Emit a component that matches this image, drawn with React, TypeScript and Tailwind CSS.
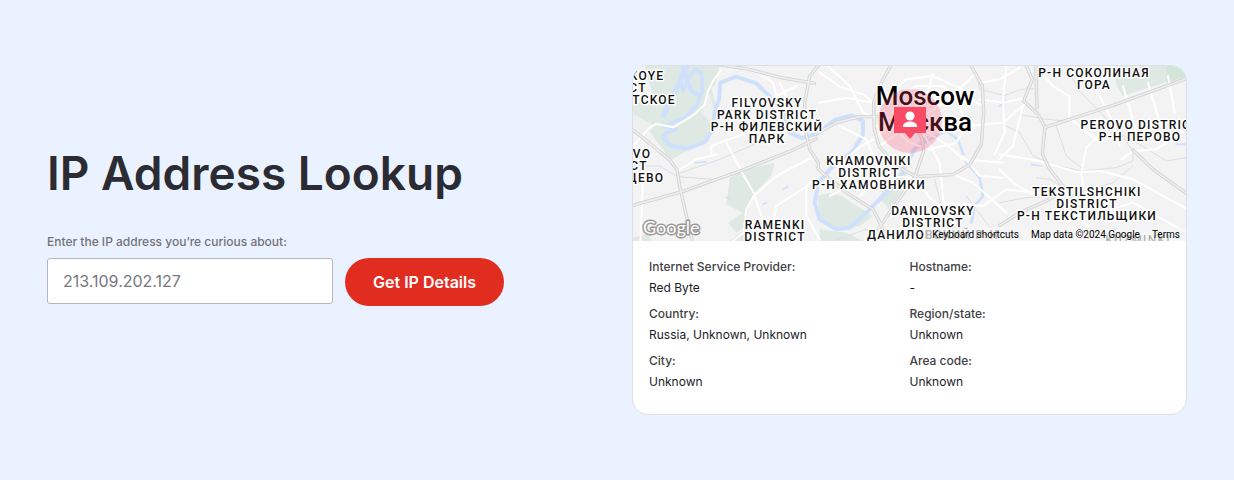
type Label = { x: number; y: number; lines: string[] };

const labels: Label[] = [
  { x: 14, y: 14, lines: ["KOYE"] },
  { x: 5, y: 26, lines: ["CT"] },
  { x: 21, y: 38, lines: ["TCKOE"] },
  { x: 134, y: 41, lines: ["FILYOVSKY", "PARK DISTRICT", "Р-Н ФИЛЕВСКИЙ", "ПАРК"] },
  { x: 9, y: 92, lines: ["VO"] },
  { x: 6, y: 104, lines: ["CT"] },
  { x: 13, y: 116, lines: ["ЦЕВО"] },
  { x: 142, y: 163, lines: ["RAMENKI", "DISTRICT"] },
  { x: 236, y: 99, lines: ["KHAMOVNIKI", "DISTRICT", "Р-Н ХАМОВНИКИ"] },
  { x: 300, y: 149, lines: ["DANILOVSKY", "DISTRICT", "ДАНИЛОВСКИЙ Р-Н"] },
  { x: 461, y: 11, lines: ["Р-Н СОКОЛИНАЯ", "ГОРА"] },
  { x: 507, y: 63, lines: ["PEROVO DISTRICT", "Р-Н ПЕРОВО"] },
  { x: 454, y: 130, lines: ["TEKSTILSHCHIKI", "DISTRICT", "Р-Н ТЕКСТИЛЬЩИКИ"] },
  { x: 505, y: 178, lines: ["KUZMINKI"] },
];

const highways = [
  // west
  "M0 192L60 240L112 284L132 312L140 360L158 440L178 525",
  "M0 418L150 376L330 312L480 252L550 218",
  "M250 -5L350 10L440 34L545 52",
  // third ring
  "M559 -5L530 30L515 110L514 180L530 250L556 290L556 310L640 380L720 430L746 480L760 525",
  "M546 205L610 170L680 152L740 152",
  "M775 -5L740 60L722 110L724 190L738 240L790 300L850 332L960 326L1010 296L1045 235L1052 140L1048 60L1015 0",
  "M735 490L790 410L845 334L872 255L868 220L850 185",
  // east
  "M1178 -5L1198 40L1172 105L1215 145L1236 184L1228 265L1250 310L1290 360",
  "M1208 0L1210 60L1212 125",
  "M1236 184L1440 118L1660 38",
  "M1100 478L1160 440L1240 405L1290 375",
  "M1500 252L1560 310L1660 382",
];

const roads = [
  "M0 240L50 185L70 174L120 184L185 145L215 115L225 75L240 45L262 15",
  "M235 262L235 240L390 182",
  "M130 318L190 280L250 265",
  "M278 226L330 325L362 380L390 465",
  "M362 390L430 330L545 270",
  "M362 390L340 430L332 500L300 525",
  "M545 340L515 365L430 420L420 470",
  "M520 365L520 450L560 520",
  "M30 340L22 525",
  "M350 5L420 50L430 90L490 60",
  "M440 50L475 125L515 170",
  "M560 20L620 62L690 85L722 110",
  "M560 110L640 95L720 110",
  "M585 0L650 60L690 140L722 155",
  "M775 80L820 40L900 30L990 70L1030 110L1052 120",
  "M800 90L850 60L930 60L975 110L1000 180L970 230L890 250L830 230L790 190L780 140L800 90",
  "M725 180L800 170L850 150",
  "M724 210L780 185L850 170",
  "M740 240L830 175L870 120L900 25",
  "M870 150L940 105L1030 20",
  "M880 170L1000 180L1110 170L1180 110",
  "M870 190L940 235L990 280L1110 290",
  "M870 200L920 290L932 410L970 515",
  "M620 180L700 220L745 330L680 390",
  "M620 300L670 250L720 220",
  "M590 390L670 350L750 330L840 335",
  "M850 335L890 395L960 450",
  "M960 325L1020 350L1065 390L1120 440",
  "M990 270L1040 330L1110 335",
  "M860 440L940 410L1050 420L1120 370L1200 380",
  "M1040 100L1110 110L1180 95",
  "M1040 50L1100 40L1160 5",
  "M1120 0L1110 100L1115 200L1085 265",
  "M1101 265L1220 285L1330 318L1400 315L1500 340L1660 428",
  "M1225 20L1260 60L1310 92L1308 155L1400 230",
  "M1380 50L1440 170L1460 240",
  "M1395 210L1360 245L1345 320L1350 365",
  "M1470 60L1520 230",
  "M1545 50L1580 170",
  "M1605 30L1625 140",
  "M1465 280L1500 255L1570 250L1660 190",
  "M1100 310L1140 350L1200 385",
  "M1100 280L1140 240L1170 120",
  "M1290 380L1370 490",
  "M1420 435L1500 410L1660 500",
];

const railways = [
  "M130 325L260 280L380 228L440 180",
  "M135 332L240 340L320 322",
  "M0 300L80 300L130 330",
  "M600 525L700 490L800 525",
  "M546 300L590 340L650 370",
  "M905 340L930 440L920 525",
  "M1030 20L1040 70L1120 90",
  "M1110 90L1165 70L1200 68",
  "M1101 170L1160 200L1200 270L1270 300L1350 315L1450 305L1500 285L1500 255L1460 200L1340 75L1300 0",
  "M1160 145L1240 160L1300 165",
  "M1270 180L1300 270L1350 310",
  "M1430 185L1520 235L1600 285L1660 275",
  "M1210 335L1250 340L1290 365",
  "M1101 410L1180 395L1290 390",
  "M1340 380L1440 350L1500 300",
  "M1000 390L1060 470L1110 525",
];

function CityMap() {
  return (
    <svg
      className="block h-full w-full"
      viewBox="0 0 553 175"
      preserveAspectRatio="xMidYMid slice"
      role="img"
      aria-label="Map of Moscow"
    >
      <rect width="553" height="175" fill="#f3f3f4" />
      <g transform="scale(0.33333)" fill="none" strokeLinecap="round" strokeLinejoin="round">
        <g fill="#dfe9e3">
          <path d="M35 0H258L248 55L236 70L248 110L240 190L225 228L180 245L108 284L90 250L66 220L50 195L62 178L0 145V120L60 90Z" />
          <path d="M290 335L345 310L425 290L415 330L365 380L345 430L340 480L310 500L285 470L330 440L280 415Z" />
          <path d="M0 515L40 505L60 525H0Z" />
          <path d="M290 525L330 495L380 500L400 525Z" />
          <path d="M553 390Q600 370 640 400L720 450L680 480L600 490L560 460Z" />
          <path d="M735 395L800 320L825 310L810 370L770 430Z" />
          <path d="M560 490L640 500L690 525H560Z" />
          <path d="M1445 0H1660V30L1470 90L1450 60Z" />
        </g>
        <path d="M1600 0H1660V32L1600 52Z" fill="#d2e5d8" />
        <g fill="#eef0f0">
          <path d="M0 145L58 175L40 210L0 190Z" />
          <path d="M228 80L244 130L236 170L205 140Z" />
        </g>
        <g stroke="#cfe0fc">
          <path d="M94 178L130 190L100 200L90 215L115 240L165 248L215 228L240 190L244 140L258 100L262 50L310 32L370 52L430 110L460 160L470 200L505 216L550 204L605 162L655 148L690 165L690 205L660 255L600 300L556 350L545 410L560 460L610 490L650 485L700 440L750 390L795 345L825 285L845 250L880 215" strokeWidth="12" />
          <path d="M165 0L140 35L150 75L165 40L185 10L205 20L208 75L190 120L155 155L115 170L92 182" strokeWidth="11" />
          <path d="M148 30L92 148" strokeWidth="15" />
          <path d="M150 5L175 75L195 85" strokeWidth="13" />
          <path d="M845 250L900 215L940 195L975 220L1000 290L1040 335L1050 390L1025 420L1015 470" strokeWidth="8" />
          <path d="M1101 120L1120 105M1655 235L1630 235" strokeWidth="6" />
          <path d="M1195 295L1225 300M1183 65L1188 72M185 290L220 288M280 394L288 398M390 415L400 410M450 370L465 362" strokeWidth="5" />
        </g>
        <g stroke="#dcdde0" strokeWidth="3">
          {railways.map((d) => (
            <path key={d} d={d} />
          ))}
        </g>
        <g stroke="#ffffff" strokeWidth="6">
          {roads.map((d) => (
            <path key={d} d={d} />
          ))}
        </g>
        <g stroke="#d0d1d3" strokeWidth="10">
          {highways.map((d) => (
            <path key={d} d={d} />
          ))}
        </g>
        <g stroke="#eeeeef" strokeWidth="5">
          {highways.map((d) => (
            <path key={d} d={d} />
          ))}
        </g>
      </g>
      <g
        className="font-[Roboto,sans-serif] text-[12px] font-medium tracking-widest"
        textAnchor="middle"
        fill="#111111"
        stroke="#ffffff"
        strokeWidth="3"
        strokeLinejoin="round"
        paintOrder="stroke"
      >
        {labels.map((label) => (
          <text key={label.lines.join() + label.y} y={label.y}>
            {label.lines.map((line, i) => (
              <tspan key={line} x={label.x} dy={i === 0 ? 0 : 12}>
                {line}
              </tspan>
            ))}
          </text>
        ))}
      </g>
      <g
        className="font-[Roboto,sans-serif] text-[26px] font-medium"
        textAnchor="middle"
        fill="#000000"
        stroke="#ffffff"
        strokeWidth="3"
        strokeLinejoin="round"
        paintOrder="stroke"
      >
        <text x="292" y="39">Moscow</text>
        <text x="292" y="65">Москва</text>
      </g>
      <circle cx="277" cy="55" r="32" fill="#fa4b66" fillOpacity="0.25" />
      <path d="M261 41H293V67H282L277 73L272 67H261Z" fill="#fa4b66" />
      <circle cx="277" cy="50" r="4.5" fill="#ffffff" />
      <path d="M270 61V60C270 57 274 55.500 277 55.500S284 57 284 60V61Z" fill="#ffffff" />
      <text
        className="font-[Lato,sans-serif] text-[18px]"
        x="10"
        y="168"
        fill="#ffffff"
        stroke="#999999"
        strokeWidth="3"
        strokeLinejoin="round"
        paintOrder="stroke"
      >
        Google
      </text>
    </svg>
  );
}

const details = [
  { name: "Internet Service Provider:", value: "Red Byte" },
  { name: "Hostname:", value: "-" },
  { name: "Country:", value: "Russia, Unknown, Unknown" },
  { name: "Region/state:", value: "Unknown" },
  { name: "City:", value: "Unknown" },
  { name: "Area code:", value: "Unknown" },
];

export default function App() {
  return (
    <main className="flex min-h-screen items-center justify-center bg-[#ebf2ff] font-[Inter,sans-serif]">
      <div className="grid w-full max-w-[1140px] grid-cols-2 items-center gap-[30px]">
        <section className="pb-[30px]">
          <h1 className="text-[46px] leading-[58px] font-semibold text-[#2b2b33]">
            IP Address Lookup
          </h1>
          <form className="mt-8" onSubmit={(e) => e.preventDefault()}>
            <label htmlFor="ip" className="block text-[12px] leading-4 font-medium text-[#727279]">
              Enter the IP address you’re curious about:
            </label>
            <div className="mt-2 flex items-start gap-3">
              <input
                id="ip"
                type="text"
                placeholder="213.109.202.127"
                className="h-[46px] w-[286px] rounded-[3px] border border-[#b5b5ba] bg-white px-[15px] text-[16px] text-[#2b2b33] placeholder:text-[#77777d]"
              />
              <button
                type="submit"
                className="h-12 rounded-full bg-[#e12d1f] px-7 text-[16px] font-semibold text-white"
              >
                Get IP Details
              </button>
            </div>
          </form>
        </section>

        <section className="overflow-hidden rounded-2xl border border-[#dedfe3] bg-white">
          <div className="relative h-[175px]">
            <CityMap />
            <div className="absolute right-0 bottom-0 flex h-[14px] items-center bg-[#f5f5f5]/70 font-[Roboto,sans-serif] text-[10px] leading-4 text-black">
              <button type="button" className="px-[6px] pt-[2px]">
                Keyboard shortcuts
              </button>
              <span className="px-[6px] pt-[2px]">Map data ©2024 Google</span>
              <a href="#terms" className="px-[6px] pt-[2px]">
                Terms
              </a>
            </div>
          </div>
          <dl className="grid grid-cols-2 gap-y-[5px] px-4 pt-[15px] pb-[22px] text-[12px] leading-[21px]">
            {details.map((item) => (
              <div key={item.name}>
                <dt className="font-medium text-[#3f3f46]">{item.name}</dt>
                <dd className="text-[#1c1c28]">{item.value}</dd>
              </div>
            ))}
          </dl>
        </section>
      </div>
    </main>
  );
}
